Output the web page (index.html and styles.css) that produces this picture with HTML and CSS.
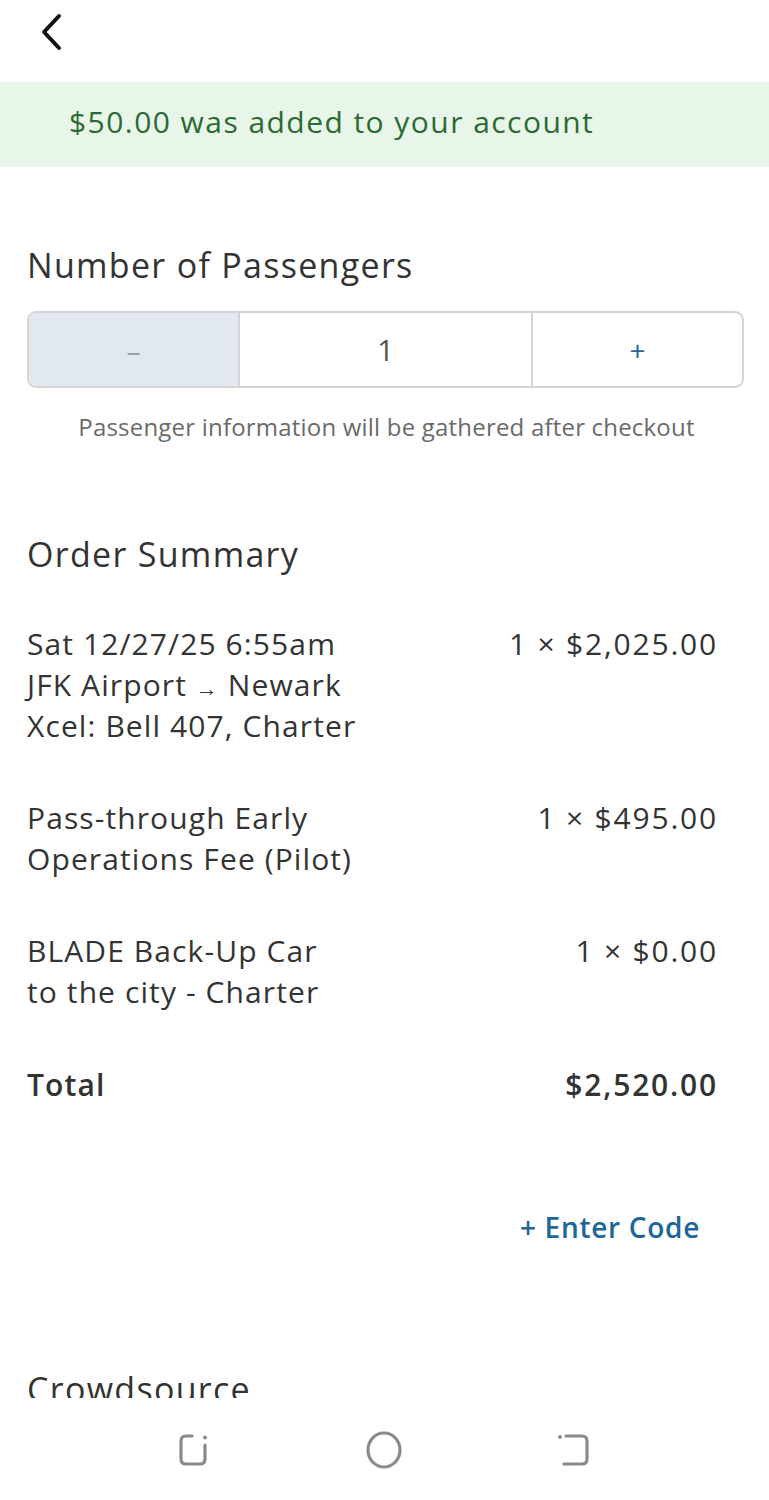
FILE: index.html
```html
<!DOCTYPE html>
<html>
<head>
<meta charset="utf-8">
<link rel="stylesheet" href="styles.css">
</head>
<body>
<header class="topbar">
  <svg class="back" width="30" height="40" viewBox="0 0 30 40"><path d="M23 4 L8 20 L23 36" fill="none" stroke="#111" stroke-width="4" stroke-linecap="round" stroke-linejoin="round"/></svg>
</header>
<div class="banner">$50.00 was added to your account</div>
<main class="content">
  <h2 class="title passengers-title">Number of Passengers</h2>
  <div class="stepper">
    <div class="cell minus">–</div>
    <div class="cell count">1</div>
    <div class="cell plus">+</div>
  </div>
  <p class="note">Passenger information will be gathered after checkout</p>

  <h2 class="title summary-title">Order Summary</h2>
  <div class="items">
    <div class="item">
      <div class="desc">Sat 12/27/25 6:55am<br>JFK Airport <span class="arrow">→</span> Newark<br>Xcel: Bell 407, Charter</div>
      <div class="price">1 × $2,025.00</div>
    </div>
    <div class="item">
      <div class="desc">Pass-through Early<br>Operations Fee (Pilot)</div>
      <div class="price">1 × $495.00</div>
    </div>
    <div class="item">
      <div class="desc">BLADE Back-Up Car<br>to the city - Charter</div>
      <div class="price">1 × $0.00</div>
    </div>
    <div class="item total">
      <div class="desc">Total</div>
      <div class="price">$2,520.00</div>
    </div>
  </div>
  <div class="code-row"><span class="code">+ Enter Code</span></div>
  <h2 class="title crowd-title">Crowdsource</h2>
</main>
<nav class="navbar">
  <svg width="34" height="36" viewBox="0 0 34 36"><path d="M14 4 H8 Q3 4 3 9 V27 Q3 32 8 32 H22 Q27 32 27 27 V13" fill="none" stroke="#8a8a8a" stroke-width="3.2" stroke-linecap="round"/><circle cx="27" cy="5.5" r="1.9" fill="#8a8a8a"/></svg>
  <svg width="40" height="40" viewBox="0 0 40 40"><ellipse cx="20" cy="20" rx="16" ry="17" fill="none" stroke="#8a8a8a" stroke-width="3.2"/></svg>
  <svg width="36" height="36" viewBox="0 0 36 36"><path d="M10 4 H26 Q31 4 31 9 V27 Q31 32 26 32 H8" fill="none" stroke="#8a8a8a" stroke-width="3.2" stroke-linecap="round"/><circle cx="4" cy="5" r="1.9" fill="#8a8a8a"/></svg>
</nav>
</body>
</html>
```
FILE: styles.css
```css
* { box-sizing: border-box; }
html, body { margin: 0; padding: 0; background: #fff; }
body {
  font-family: "Open Sans", "Noto Sans", sans-serif;
  color: #333;
  width: 769px;
  height: 1500px;
  overflow: hidden;
}
.topbar {
  height: 82px;
  display: flex;
  align-items: flex-start;
  padding: 12px 0 0 36px;
}
.banner {
  height: 85px;
  background: #e8f5e9;
  color: #2b6a33;
  font-size: 30px;
  letter-spacing: 1.45px;
  display: flex;
  align-items: center;
  padding-left: 69px;
  padding-bottom: 6px;
}
.content {
  padding: 0 25px 0 27px;
}
.title {
  margin: 0;
  font-weight: 500;
  font-size: 34px;
  letter-spacing: 1.3px;
  color: #333;
  line-height: 40px;
}
.passengers-title { margin-top: 78px; }
.stepper {
  margin-top: 26px;
  height: 77px;
  border: 2px solid #d4d4d4;
  border-radius: 9px;
  display: flex;
  overflow: hidden;
}
.cell {
  display: flex;
  align-items: center;
  justify-content: center;
  font-size: 28px;
}
.minus { width: 211px; background: #e2e8ef; color: #9aa0a6; border-right: 2px solid #d4d4d4; }
.count { width: 293px; color: #555; border-right: 2px solid #d4d4d4; font-size: 30px; }
.plus { flex: 1; color: #1f66a0; }
.note {
  margin: 22px 0 0;
  text-align: center;
  font-size: 24px;
  letter-spacing: 0.2px;
  color: #6a6a6a;
  padding-left: 2px;
}
.summary-title { margin-top: 91px; }
.items {
  margin-top: 49px;
  padding-right: 26px;
  display: flex;
  flex-direction: column;
  gap: 51px;
}
.item {
  display: flex;
  justify-content: space-between;
  font-size: 30px;
  line-height: 41px;
  letter-spacing: 1.1px;
}
.arrow { font-size: 22px; line-height: 0; }
.price { text-align: right; letter-spacing: 1.8px; }
.total { font-weight: 600; margin-top: 1px; }
.total .price { font-weight: 600; letter-spacing: 1.8px; }
.code-row {
  display: flex;
  justify-content: flex-end;
  padding-right: 44px;
  margin-top: 103px;
}
.code {
  color: #1c6698;
  font-size: 28px;
  font-weight: 600;
  letter-spacing: 0.7px;
}
.crowd-title { margin-top: 123px; }
.navbar {
  position: fixed;
  left: 0;
  right: 0;
  bottom: 0;
  height: 102px;
  background: #fff;
  display: flex;
  align-items: center;
  justify-content: center;
  gap: 152px;
  padding-top: 2px;
}
```
